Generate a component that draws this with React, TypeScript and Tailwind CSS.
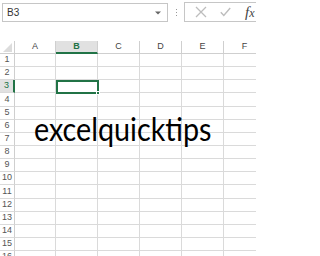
import React from "react";

const cols = ["A", "B", "C", "D", "E", "F"];
const colWidths = [41, 42, 42, 42, 42, 42];

// row heights as the screenshot gives them (about 13.14px each)
const rowHeights = Array.from({ length: 16 }, (_, i) => {
  const top = Math.round(54 + 13.14 * i);
  const bottom = Math.round(54 + 13.14 * (i + 1));
  return bottom - top;
});

function FormulaBar() {
  return (
    <div className="flex h-[41px] items-start pt-[2px]">
      <div className="ml-[2px] mt-[1px] flex h-[19px] w-[166px] items-center justify-between border border-[#c6c6c6] px-[4px]">
        <span className="text-[10px] text-[#333]">B3</span>
        <svg width="6" height="4" viewBox="0 0 6 4" className="mr-[2px]">
          <path d="M0 0.5h6L3 3.5z" fill="#666" />
        </svg>
      </div>
      <div className="flex h-[20px] w-[16px] flex-col items-center justify-center gap-[2px]">
        <span className="h-[1px] w-[1px] bg-[#999]" />
        <span className="h-[1px] w-[1px] bg-[#999]" />
        <span className="h-[1px] w-[1px] bg-[#999]" />
      </div>
      <div className="flex h-[20px] flex-1 items-center border-y border-l border-[#c6c6c6] pl-[10px]">
        <svg width="12" height="12" viewBox="0 0 12 12">
          <path d="M1 1L11 11M11 1L1 11" stroke="#bdbdbd" strokeWidth="1.3" />
        </svg>
        <svg width="11" height="10" viewBox="0 0 11 10" className="ml-[13px]">
          <path d="M0.8 5.2L3.8 8.4L10.2 1" stroke="#bdbdbd" strokeWidth="1.4" fill="none" />
        </svg>
        <span className="ml-[14px] text-[15px] italic leading-none text-[#444] [font-family:'Liberation_Serif',serif]">
          f<span className="text-[12px]">x</span>
        </span>
      </div>
    </div>
  );
}

function HeaderRow() {
  return (
    <div className="flex h-[13px]">
      <div className="relative w-[15px] shrink-0 border-b border-r border-[#cfcfcf]">
        <svg width="9" height="9" viewBox="0 0 9 9" className="absolute bottom-[1px] right-[2px]">
          <path d="M9 0V9H0z" fill="#dcdcdc" />
        </svg>
      </div>
      {cols.map((c, i) => {
        const sel = c === "B";
        return (
          <div
            key={c}
            style={{ width: colWidths[i] }}
            className={`flex shrink-0 items-center justify-center border-r text-[9px] ${
              sel
                ? "border-b-2 border-r-[#cfcfcf] border-b-[#217346] bg-[#e1e1e1] font-bold text-[#217346]"
                : "border-b border-[#cfcfcf] text-[#444]"
            }`}
          >
            {c}
          </div>
        );
      })}
    </div>
  );
}

export default function App() {
  return (
    <div className="relative h-[256px] w-[256px] overflow-hidden bg-white [font-family:'Liberation_Sans',Arial,sans-serif]">
      <FormulaBar />
      <HeaderRow />
      {rowHeights.map((h, r) => {
        const sel = r === 2;
        return (
          <div key={r} className="flex" style={{ height: h }}>
            <div
              className={`flex w-[15px] shrink-0 items-center justify-center border-b border-[#dadada] text-[9px] ${
                sel
                  ? "border-r-2 border-r-[#217346] bg-[#e1e1e1] text-[#217346]"
                  : "border-r border-r-[#cfcfcf] text-[#555]"
              }`}
            >
              {r + 1}
            </div>
            {cols.map((c, i) => (
              <div
                key={c}
                style={{ width: colWidths[i] }}
                className="shrink-0 border-b border-r border-[#dadada]"
              />
            ))}
          </div>
        );
      })}

      {/* active cell B3 */}
      <div className="absolute left-[56px] top-[80px] h-[14px] w-[43px] border-2 border-[#217346]">
        <span className="absolute -bottom-[3px] -right-[3px] h-[4px] w-[4px] border border-white bg-[#217346]" />
      </div>

      {/* text overflowing from A6 */}
      <div className="absolute left-[34px] top-[112px] origin-left scale-x-[0.87] text-[33px] leading-none text-black [font-family:Lato,sans-serif]">
        excelquicktips
      </div>
    </div>
  );
}
